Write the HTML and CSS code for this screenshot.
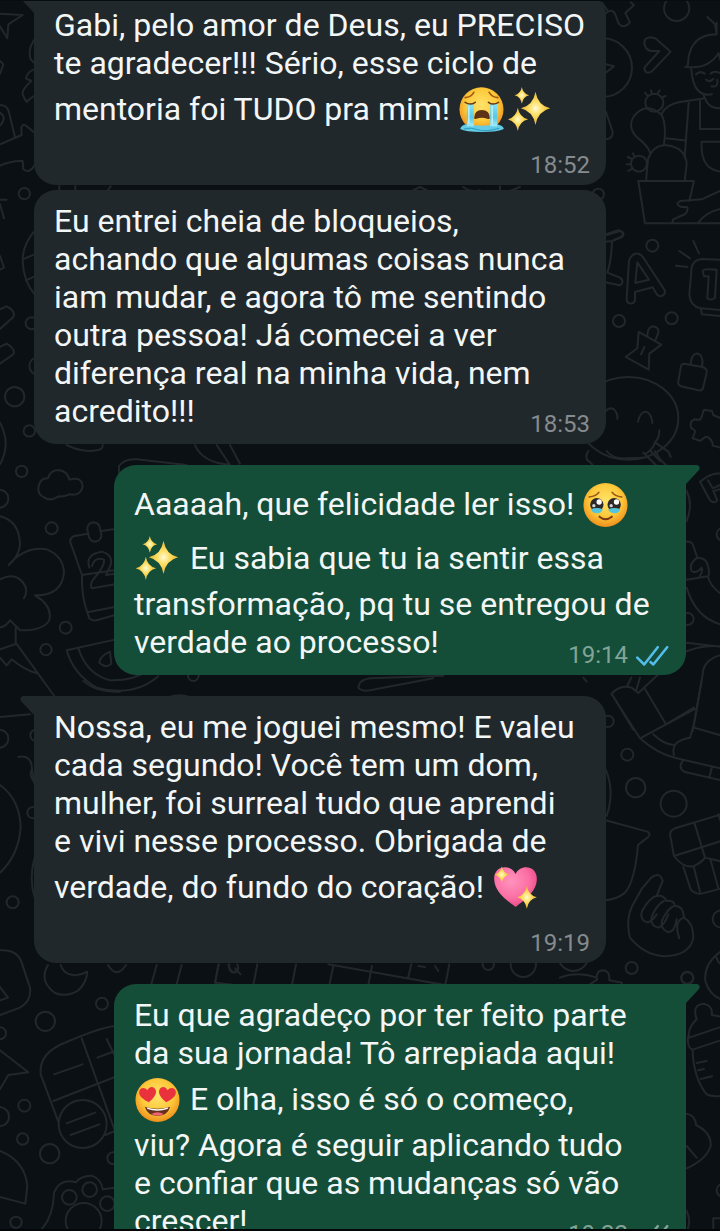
FILE: index.html
```html
<!DOCTYPE html>
<html lang="pt-BR">
<head>
<meta charset="utf-8">
<meta name="viewport" content="width=device-width, initial-scale=1">
<title>Conversa</title>
<link rel="stylesheet" href="styles.css">
</head>
<body>
<svg width="0" height="0" class="defs" aria-hidden="true">
  <defs>
    <radialGradient id="face" cx=".5" cy=".4" r=".6"><stop offset="0" stop-color="#ffe36b"/><stop offset=".6" stop-color="#fdc93a"/><stop offset="1" stop-color="#ee8f1c"/></radialGradient>
    <radialGradient id="gold"><stop offset="0" stop-color="#fffbd8"/><stop offset=".4" stop-color="#fde068"/><stop offset="1" stop-color="#e9b32b"/></radialGradient>
    <linearGradient id="tear" x2="0" y2="1"><stop offset="0" stop-color="#8be3f4"/><stop offset=".6" stop-color="#58c7e6"/><stop offset="1" stop-color="#a5ecf7"/></linearGradient>
    <radialGradient id="pink" cx=".4" cy=".35" r=".7"><stop offset="0" stop-color="#ff93bd"/><stop offset=".6" stop-color="#fb6fa5"/><stop offset="1" stop-color="#e84585"/></radialGradient>
    <path id="star" d="M0-50Q7-9 44 0Q7 9 0 50Q-7 9-44 0Q-7-9 0-50Z" fill="url(#gold)"/>
    <path id="love" d="M0 24C-12 16-28 4-25-10C-22-24-6-24 0-12C6-24 22-24 25-10C28 4 12 16 0 24Z" fill="#e9323c"/>
  </defs>
  <symbol id="cry" viewBox="0 -3 141 162">
    <circle cx="69" cy="79" r="66" fill="url(#face)"/>
    <path d="M20 44Q38 42 46 28M92 28Q100 42 118 44" fill="none" stroke="#a45a13" stroke-width="5" stroke-linecap="round"/>
    <path d="M5 138Q8 126 25 124Q69 132 115 124Q134 127 136 138Q120 147 70 147Q20 147 5 138Z" fill="#63cbe6"/>
    <path d="M25 62H46V130H25ZM95 62H116V130H95Z" fill="url(#tear)"/>
    <path d="M20 58Q36 68 50 58M90 58Q104 68 120 58" fill="none" stroke="#6b3c12" stroke-width="5" stroke-linecap="round"/>
    <path d="M47 104Q48 81 70 81Q93 81 94 104Q94 110 86 107Q70 101 54 107Q47 110 47 104Z" fill="#5d3216"/>
    <path d="M31 70V122M101 70V122" stroke="#c2f5fb" stroke-width="4"/>
    <path d="M16 138Q38 132 58 140T122 136" fill="none" stroke="#2c9dc2" stroke-width="3"/>
  </symbol>
  <symbol id="sparkles" viewBox="0 -3 141 162">
    <use href="#star" transform="translate(87 76)"/>
    <use href="#star" transform="translate(46 37) scale(.5)"/>
    <use href="#star" transform="translate(34 109) scale(.7)"/>
  </symbol>
  <symbol id="pleading" viewBox="0 -3 141 162">
    <circle cx="69" cy="81" r="66" fill="url(#face)"/>
    <path d="M20 57Q42 54 49 43M89 43Q96 54 118 57" fill="none" stroke="#9b5714" stroke-width="5" stroke-linecap="round"/>
    <circle cx="43" cy="80" r="20" fill="#2e2929"/><circle cx="95" cy="80" r="20" fill="#2e2929"/>
    <path d="M25 94Q43 86 61 94Q56 107 43 106Q29 106 25 94ZM77 94Q96 86 113 94Q109 107 96 106Q82 106 77 94Z" fill="#55c5dc"/>
    <circle cx="50" cy="72" r="8" fill="#fff"/><circle cx="102" cy="72" r="8" fill="#fff"/>
    <circle cx="34" cy="83" r="5" fill="#cfd6d8"/><circle cx="86" cy="83" r="5" fill="#cfd6d8"/>
    <path d="M51 116Q69 131 88 116" fill="none" stroke="#7d3a13" stroke-width="6" stroke-linecap="round"/>
  </symbol>
  <symbol id="heart-eyes" viewBox="0 -3 141 162">
    <circle cx="69" cy="81" r="66" fill="url(#face)"/>
    <use href="#love" transform="translate(40 64) rotate(-7)"/>
    <use href="#love" transform="translate(98 64) rotate(7)"/>
    <path d="M31 101Q69 113 107 101Q99 128 69 128Q39 128 31 101Z" fill="#65301c"/>
    <path d="M36 103Q69 115 102 103L99 108Q69 118 39 108Z" fill="#fff"/>
    <path d="M50 123Q69 112 88 123Q69 132 50 123Z" fill="#ee6273"/>
  </symbol>
  <symbol id="shiny-heart" viewBox="0 -3 141 162">
    <path d="M69 138C48 121 5 94 5 53C5 12 55 8 69 39C83 8 133 12 133 53C133 94 90 121 69 138Z" fill="url(#pink)"/>
    <use href="#star" transform="translate(28 41) scale(.5)"/>
    <use href="#star" transform="translate(103 109) scale(.68)"/>
  </symbol>
  <symbol id="ticks" viewBox="0 0 108 66">
    <path d="M4 38L26 60L69 5M46 52L55 60L99 5" fill="none" stroke="currentColor" stroke-width="8" stroke-linecap="round" stroke-linejoin="round"/>
  </symbol>
  <symbol id="tail" viewBox="0 0 14 20"><path d="M0 0H11Q15 1 13 5L0 19Z" fill="currentColor"/></symbol>
</svg>

<main class="chat">
  <svg class="wallpaper" viewBox="0 0 720 1231" preserveAspectRatio="xMidYMin slice" aria-hidden="true">
    <g transform="translate(400) scale(.3333)">
      <path d="M606 5L622 28M618 36Q636 20 646 40L656 68Q672 86 690 64L676 36L702 12L692 4M618 190L642 196L618 214"/>
      <circle cx="830" cy="22" r="38"/><circle cx="608" cy="200" r="88"/>
      <path d="M740 144Q722 114 750 109L766 112L812 152L755 212Q735 222 733 200L778 150L752 150Z"/>
      <path d="M856 198Q866 198 865 175Q875 100 950 100M862 198Q925 205 956 156Q960 180 970 190M874 205Q880 290 936 280M922 48L945 70L950 98M950 65V98M888 220Q900 208 914 218M932 218Q945 208 958 216M918 236Q928 246 940 234M934 256Q956 260 952 236"/>
      <path d="M785 338Q800 310 840 303L915 292L910 280M866 306L854 470M796 412L852 418M900 300V384H970M915 292Q925 322 960 322M970 422H905Q900 510 970 512"/>
      <circle cx="763" cy="305" r="27"/><circle cx="717" cy="488" r="24"/>
      <path d="M742 283L735 275M756 277L753 268M772 278L779 268M785 290L797 285M696 474L683 468M692 490H680M696 504L685 510M704 467L699 457"/>
      <path d="M750 455Q745 435 712 410Q680 378 702 345Q740 300 785 342Q800 370 792 430M738 540Q742 500 744 475Q760 430 800 433Q858 440 860 490L854 540M715 540H882L868 600M715 540L735 667H970M970 565Q935 582 905 595L842 600Q822 610 845 618L862 618Q866 640 842 645L820 655L816 667M895 665Q920 630 970 622"/>
      <path d="M618 333L638 392Q640 412 618 415M618 700L655 688Q674 692 666 706L640 718M35 570L60 558L85 570M190 558Q210 575 240 568M300 556V570H330L360 558"/>
      <circle cx="595" cy="580" r="17"/>
    </g>
    <g transform="translate(600 200) scale(.3333)">
      <path d="M15 104L60 90Q78 96 66 108L36 120Q34 180 22 215L60 230Q76 242 60 253L15 244M36 120L15 122"/>
      <circle cx="157" cy="134" r="18"/><circle cx="57" cy="360" r="18"/><circle cx="215" cy="352" r="18"/>
      <path d="M80 294L87 178Q96 156 115 158Q124 160 130 170L194 268Q198 282 182 286Q174 286 168 276L158 259L105 273V297Q102 310 88 307Q80 305 80 294ZM112 184L106 246L147 236Z"/>
      <path d="M238 150L270 172M280 120L297 157M228 194L262 198M370 177L306 174Q280 176 275 200L268 280Q270 315 302 322L370 328M302 322L306 340L370 346M308 210Q310 202 350 206L345 290Q335 300 322 292L326 226H312Z"/>
      <path d="M116 393L184 431L148 458L146 506L77 468L112 442ZM142 404Q142 378 160 376Q180 380 174 398L166 418M133 438L123 460"/>
      <path d="M252 488L308 498Q322 503 320 515L309 562Q306 570 295 568L243 556Q232 550 235 540L243 496Q245 488 252 488ZM272 490Q275 455 294 458Q312 464 306 497"/>
      <ellipse cx="85" cy="652" rx="150" ry="124"/>
      <path d="M10 640Q25 615 42 625Q54 638 52 654M114 662Q120 632 138 632Q155 638 157 666M178 688Q178 712 165 724Q160 745 135 760M165 724L205 752L212 768M150 748L180 780"/>
      <path d="M370 655L340 642L336 630L312 626L304 650Q300 660 285 655Q268 660 273 680L286 690L278 712L302 720Q318 700 328 712Q340 724 338 734L370 742"/>
    </g>
    <g transform="scale(.3333)">
      <path d="M0 38L68 42L25 70L22 112L0 76M0 180L10 190L0 218M104 115Q82 145 92 175L102 185M102 205Q82 212 78 232L94 240Q60 270 70 285Q80 310 84 298L102 285M0 312Q20 312 26 330L45 408M0 335Q22 350 0 374M0 430L65 402L64 380Q70 365 80 376L102 394M0 494Q35 478 68 480L70 505Q88 520 104 492M178 555V570M226 555V570M322 570L332 556"/>
      <circle cx="73" cy="578" r="17"/><circle cx="44" cy="1187" r="29"/><circle cx="88" cy="1290" r="17"/><circle cx="95" cy="967" r="18"/><circle cx="115" cy="1095" r="27"/>
      <path d="M0 596H20M0 610L12 652M0 765L12 800L0 806M104 690Q68 730 68 780Q70 840 104 880M68 775L104 760M78 838L104 826M0 925L20 916Q48 930 40 948L0 984M0 1038L20 1028Q48 1045 40 1060L0 1088M0 1265Q34 1330 0 1390"/>
    </g>
    <g transform="translate(0 440) scale(.3333)">
      <circle cx="65" cy="91" r="17"/><circle cx="-2" cy="173" r="27"/><circle cx="155" cy="262" r="18"/><circle cx="197" cy="560" r="18"/><circle cx="138" cy="626" r="17"/><circle cx="580" cy="704" r="16"/>
      <path d="M200 12Q245 35 290 28Q310 25 308 12M585 12Q600 50 650 65L690 72M650 12L690 72M690 12L720 68M357 110V75Q375 52 410 55L560 72"/>
      <path d="M144 112Q150 88 175 87Q203 90 208 116Q244 105 248 135Q244 166 208 160Q190 168 176 166Q150 182 134 170Q110 160 116 135Q122 110 144 112Z"/>
      <path d="M0 226Q58 240 60 310Q58 345 26 372Q75 315 140 325Q190 345 192 395Q185 465 105 463Q160 495 147 540Q125 570 60 568Q42 550 30 538Q20 555 0 560M0 415Q40 395 65 420Q88 445 72 472M47 560V605L165 768M0 625L45 610M0 650L20 673L35 655Q70 685 110 697M0 828L90 820"/>
      <path d="M345 264L304 270M264 278L220 286Q205 296 214 312L246 402L342 388M246 402Q244 465 262 514L344 498M262 514L268 532Q276 540 290 538L345 522M268 380Q255 340 305 332Q340 342 332 372L318 402L345 398M276 376Q285 345 312 356Q315 375 280 415Q268 430 276 442L345 430"/>
      <rect x="264" y="244" width="38" height="58" rx="19" transform="rotate(-12 283 273)"/>
      <path d="M345 596L200 628Q220 700 290 740Q400 770 475 706M235 622Q260 700 330 718Q400 720 440 690M330 632Q300 645 298 665Q318 685 334 668ZM500 770Q540 755 575 770"/>
      <path d="M1075 740L1080 725Q1090 715 1110 712L1330 704M1075 740Q1085 752 1110 748L1300 712"/>
    </g>
    <g transform="translate(560 450) scale(.3333)">
      <path d="M85 0Q75 15 82 28Q95 35 98 44M140 0Q160 25 200 22L250 20M250 5L290 44M285 0L300 25L320 44M420 92L440 78Q470 60 500 72M420 92L450 148Q462 160 472 148L460 120L500 110M444 88L458 112L490 98"/>
      <path d="M380 120Q400 160 380 210M380 272Q395 270 400 285L412 320Q440 320 444 345Q450 370 444 376L380 386M412 320Q385 340 395 360Q408 370 425 350Q430 360 418 378M380 410Q410 510 500 524M444 376Q450 410 500 440M70 680L80 692"/>
      <circle cx="490" cy="250" r="20"/><circle cx="383" cy="504" r="18"/>
      <path d="M380 575L500 590M360 610Q420 580 480 586M500 608Q430 620 428 670L398 840M155 728L220 836M155 728Q180 700 215 710L235 726L370 600M200 708L214 680M228 720L240 680M255 714L318 820M318 820L402 770"/>
    </g>
    <g transform="translate(560 680) scale(.3333)">
      <path d="M155 40L240 172Q290 218 350 232L500 266M240 172L404 84M280 160Q310 190 342 192M342 222Q330 180 390 170L402 130L425 0M402 140L500 168M370 238Q352 258 372 272L500 302M455 262L448 290"/>
      <circle cx="144" cy="121" r="17"/><circle cx="202" cy="221" r="18"/><circle cx="227" cy="320" r="29"/><circle cx="341" cy="368" r="39"/><circle cx="484" cy="714" r="26"/><circle cx="215" cy="861" r="18"/><circle cx="382" cy="890" r="18"/><circle cx="40" cy="825" r="45"/>
      <path d="M137 265Q165 330 140 405M137 418L262 452Q275 458 262 470L234 492Q225 600 195 635Q170 655 137 658"/>
      <path d="M500 395L345 442Q325 450 332 470L342 525Q370 562 400 556Q425 545 435 530L500 545M404 428L435 530M342 525L500 475M370 558L392 625Q405 640 425 638L500 618M402 560L420 632M452 538L475 622M475 400L490 445"/>
      <path d="M246 622L274 590Q300 570 308 600L290 645Q310 640 320 660Q340 655 346 675Q370 675 372 710Q400 725 400 770Q390 825 310 826Q250 820 210 770Q195 710 222 665L246 622M290 645Q270 648 246 690Q238 715 260 724Q275 725 290 700M312 660Q290 670 275 708Q270 735 295 740Q312 735 325 700M342 675Q325 680 306 718Q300 745 325 754Q345 752 350 715M372 710Q340 720 358 772"/>
      <path d="M0 890Q50 870 110 890Q110 868 130 868Q150 870 148 898L185 905L190 925M90 910L112 895M500 800Q430 840 436 900Q450 950 500 960M470 830Q475 855 500 850"/>
    </g>
    <g transform="translate(0 680) scale(.3333)">
      <circle cx="-2" cy="173" r="27"/><circle cx="108" cy="163" r="17"/><circle cx="99" cy="395" r="17"/><circle cx="38" cy="664" r="18"/>
      <path d="M55 228Q95 220 96 265L104 310M96 265Q85 280 104 305M0 312Q60 355 62 440Q55 525 0 575M104 530Q86 590 104 650M250 0Q290 35 360 32"/>
    </g>
    <g transform="translate(0 940) scale(.3333)">
      <path d="M0 28Q52 25 65 65L90 140Q95 180 60 200L0 222M0 138L24 170L0 178M144 72Q115 120 165 156Q200 170 235 148Q260 125 262 92Q240 105 218 102Q190 98 182 72M324 72Q350 115 378 72M470 72L454 130M545 72L530 130M655 72L646 125L720 134M685 72Q700 110 715 80"/>
      <circle cx="306" cy="188" r="18"/><circle cx="136" cy="241" r="29"/><circle cx="0" cy="277" r="18"/><circle cx="73" cy="494" r="18"/><circle cx="-2" cy="527" r="29"/><circle cx="68" cy="594" r="17"/><circle cx="149" cy="638" r="29"/><circle cx="340" cy="652" r="18"/><circle cx="48" cy="844" r="17"/><circle cx="248" cy="549" r="72"/>
      <path d="M345 255Q300 260 200 303Q115 335 122 400L176 545M245 292L345 570M160 480L345 408M162 400L248 370M292 350L345 330M320 294L345 345M200 547L285 515M212 582L298 550M316 582L345 570"/>
      <path d="M0 328L85 394L25 402L0 445M0 630Q75 660 82 735L76 788L0 768M120 870Q160 830 162 755Q180 710 228 724Q240 705 275 704Q305 715 308 745L345 740"/>
      <circle cx="208" cy="769" r="22"/><circle cx="269" cy="746" r="22"/><circle cx="322" cy="788" r="22"/><circle cx="251" cy="840" r="54"/>
    </g>
    <g transform="translate(200 920) scale(.3333)">
      <path d="M56 130L45 185L95 192M172 130L160 192M288 130L276 192M400 135L388 192M516 135L505 192M634 130L625 168M748 130L736 192M385 130L735 192M88 130Q85 155 105 155Q120 150 112 130M105 142L122 160M655 135L675 138M705 135L715 150"/>
      <circle cx="865" cy="130" r="17"/><circle cx="970" cy="130" r="38"/>
    </g>
    <g transform="translate(560 980) scale(.3333)">
      <circle cx="382" cy="-8" r="18"/><circle cx="490" cy="628" r="20"/>
      <path d="M410 115Q395 70 432 68Q460 75 455 102L500 110M410 115Q380 145 388 170L500 132M385 165Q380 200 398 206L500 172M398 206Q400 290 440 340Q460 350 500 342M410 246L440 240M414 268L432 264M422 294L456 286M380 398Q408 405 408 432Q455 455 452 495Q440 535 380 562M380 495L410 530M380 690Q395 720 380 753M460 753V712H500M350 745L380 753"/>
    </g>
  </svg>

  <article class="bubble incoming first">
    <svg class="tail"><use href="#tail"/></svg>
    <p class="text">Gabi, pelo amor de Deus, eu PRECISO te agradecer!!! Sério, esse ciclo de mentoria foi TUDO pra mim! <svg class="emoji" role="img" aria-label="chorando"><use href="#cry"/></svg><svg class="emoji" role="img" aria-label="brilhos"><use href="#sparkles"/></svg></p>
    <footer class="meta"><time>18:52</time></footer>
  </article>
  <article class="bubble incoming follow">
    <p class="text">Eu entrei cheia de bloqueios, achando que algumas coisas nunca iam mudar, e agora tô me sentindo outra pessoa! Já comecei a ver diferença real na minha vida, nem acredito!!!</p>
    <footer class="meta beside"><time>18:53</time></footer>
  </article>
  <article class="bubble outgoing">
    <svg class="tail"><use href="#tail"/></svg>
    <p class="text">Aaaaah, que felicidade ler isso! <svg class="emoji" role="img" aria-label="rosto emocionado"><use href="#pleading"/></svg> <svg class="emoji" role="img" aria-label="brilhos"><use href="#sparkles"/></svg> Eu sabia que tu ia sentir essa transformação, pq tu se entregou de verdade ao processo!</p>
    <footer class="meta beside"><time>19:14</time><svg class="ticks read" role="img" aria-label="lida"><use href="#ticks"/></svg></footer>
  </article>
  <article class="bubble incoming">
    <svg class="tail"><use href="#tail"/></svg>
    <p class="text">Nossa, eu me joguei mesmo! E valeu cada segundo! Você tem um dom, mulher, foi surreal tudo que aprendi e&nbsp;vivi nesse processo. Obrigada de verdade, do fundo do coração! <svg class="emoji" role="img" aria-label="coração brilhante"><use href="#shiny-heart"/></svg></p>
    <footer class="meta"><time>19:19</time></footer>
  </article>
  <article class="bubble outgoing">
    <svg class="tail"><use href="#tail"/></svg>
    <p class="text">Eu que agradeço por ter feito parte da sua jornada! Tô arrepiada aqui! <svg class="emoji" role="img" aria-label="olhos de coração"><use href="#heart-eyes"/></svg> E olha, isso é só o começo, viu?&nbsp;Agora é seguir aplicando tudo e&nbsp;confiar que as mudanças só vão crescer!</p>
    <footer class="meta beside"><time>19:22</time><svg class="ticks" role="img" aria-label="entregue"><use href="#ticks"/></svg></footer>
  </article>
</main>
</body>
</html>
```
FILE: styles.css
```css
* {
  box-sizing: border-box;
}

body {
  margin: 0;
  background: #0b1014;
  font-family: Roboto, "Liberation Sans", sans-serif;
}

.defs {
  position: absolute;
}

.chat {
  position: relative;
  display: flex;
  flex-direction: column;
  gap: 21px;
  height: 100vh;
  overflow: hidden;
  border-top: 1px solid #080c0f;
  border-bottom: 2px solid #04070a;
}

.wallpaper {
  position: absolute;
  inset: 0;
  width: 100%;
  height: 100%;
  fill: none;
  stroke: #21272b;
  stroke-width: 6;
  stroke-linecap: round;
  stroke-linejoin: round;
}

.bubble {
  position: relative;
  flex: none;
  padding: 12px 20px 14px;
  border-radius: 22px;
  color: #f3f6f7;
}

.incoming {
  margin: 0 114px 0 34px;
  background: #21282b;
}

.outgoing {
  margin: 0 34px 0 114px;
  background: #154e38;
}

.incoming:has(.tail) {
  border-top-left-radius: 0;
}

.outgoing:has(.tail) {
  border-top-right-radius: 0;
}

.first {
  margin-top: -7px;
}

.follow {
  margin-top: -16px;
}

.tail {
  position: absolute;
  top: 0;
  width: 14px;
  height: 20px;
}

.incoming .tail {
  right: 100%;
  color: #21282b;
  transform: scaleX(-1);
}

.outgoing .tail {
  left: 100%;
  color: #154e38;
}

.text {
  margin: 0;
  font-size: 32px;
  line-height: 38px;
}

.emoji {
  display: inline-block;
  width: 48px;
  height: 54px;
  vertical-align: -16px;
}

.meta {
  display: flex;
  justify-content: flex-end;
  align-items: flex-end;
  gap: 8px;
  width: fit-content;
  height: 41px;
  margin: 0 -4px -6px auto;
  font-size: 24px;
  line-height: 24px;
  color: #858b8e;
}

.beside {
  margin-top: -35px;
}

.outgoing .meta {
  color: #82a497;
}

.ticks {
  width: 34px;
  height: 22px;
}

.read {
  color: #53bdeb;
}
```
